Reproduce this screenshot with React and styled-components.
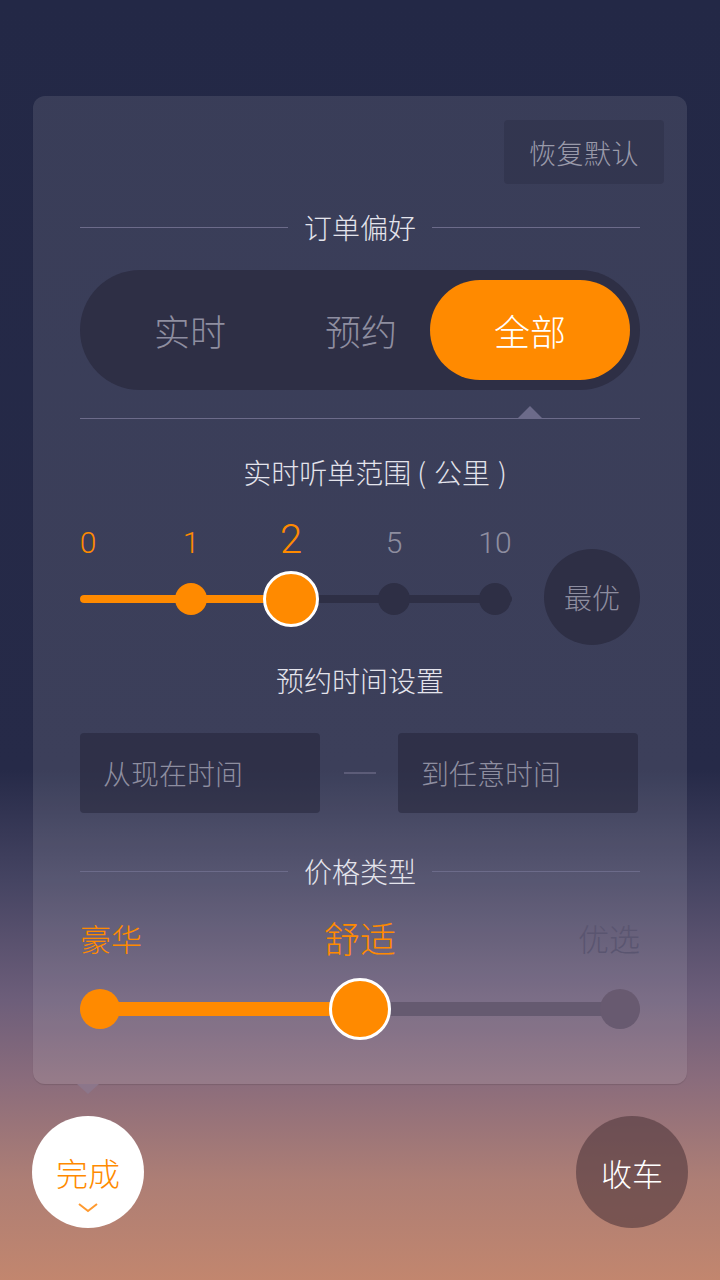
import React from "react";
import styled, { createGlobalStyle } from "styled-components";

const ORANGE = "#ff8a00";

const GlobalStyle = createGlobalStyle`
  html, body {
    margin: 0;
    padding: 0;
  }
  body {
    font-family: "Noto Sans CJK SC", "Noto Sans", sans-serif;
    font-weight: 300;
    background: #232846;
  }
  * {
    box-sizing: border-box;
  }
`;

const Page = styled.div`
  width: 720px;
  height: 1280px;
  overflow: hidden;
  display: flex;
  flex-direction: column;
  padding-top: 96px;
  background: linear-gradient(
    180deg,
    #232846 0px,
    #262a48 770px,
    #454462 880px,
    #6d5e7a 1000px,
    #8a6c7c 1080px,
    #ad7e75 1180px,
    #c2866e 1280px
  );
`;

const Card = styled.div`
  position: relative;
  margin: 0 33px;
  height: 988px;
  border-radius: 12px;
  background: rgba(255, 255, 255, 0.1);
  box-shadow: 0 1px 1px rgba(0, 0, 0, 0.12);
  padding: 24px 47px 0;
  display: flex;
  flex-direction: column;

  &::after {
    content: "";
    position: absolute;
    left: 44px;
    bottom: -10px;
    border-left: 11px solid transparent;
    border-right: 11px solid transparent;
    border-top: 10px solid rgba(140, 118, 138, 1);
  }
`;

const TopRow = styled.div`
  display: flex;
  justify-content: flex-end;
  margin-right: -24px;
`;

const ResetButton = styled.button`
  width: 160px;
  height: 64px;
  border: none;
  border-radius: 4px;
  background: rgba(20, 20, 40, 0.18);
  color: #9a9aaa;
  font-family: inherit;
  font-weight: 300;
  font-size: 27px;
  letter-spacing: 0.5px;
  padding: 0;
`;

const SectionTitle = styled.div`
  display: flex;
  align-items: center;
  gap: 16px;
  height: 40px;
  margin-top: ${({ $mt }) => $mt}px;
  color: #e4e4ec;
  font-size: 28px;

  &::before,
  &::after {
    content: "";
    flex: 1;
    height: 1px;
    background: #6c6b8a;
  }
`;

const Heading = styled.div`
  height: 40px;
  line-height: 40px;
  text-align: center;
  color: #e4e4ec;
  font-size: 28px;
  margin-top: ${({ $mt }) => $mt}px;
  padding-left: ${({ $shift }) => $shift || 0}px;
  white-space: pre;
`;

const Segmented = styled.div`
  margin-top: 23px;
  height: 120px;
  border-radius: 60px;
  background: #2e2f45;
  display: flex;
  align-items: center;
  padding-right: 10px;
`;

const Segment = styled.div`
  width: ${({ $w }) => $w}px;
  margin-right: ${({ $mr }) => $mr || 0}px;
  height: 100px;
  border-radius: 50px;
  display: flex;
  align-items: center;
  justify-content: center;
  font-size: 36px;
  color: ${({ $active }) => ($active ? "#ffffff" : "#8e8ea0")};
  background: ${({ $active }) => ($active ? ORANGE : "transparent")};
`;

const Divider = styled.div`
  position: relative;
  margin-top: 28px;
  height: 1px;
  background: #6c6b8a;

  &::before {
    content: "";
    position: absolute;
    left: 438px;
    bottom: 1px;
    border-left: 12px solid transparent;
    border-right: 12px solid transparent;
    border-bottom: 12px solid #6c6b8a;
  }
`;

const RangeRow = styled.div`
  margin-top: 7px;
  display: flex;
  align-items: flex-end;
  justify-content: space-between;
`;

const RangeBox = styled.div`
  width: 432px;
  height: 124px;
  position: relative;
`;

const RangeLabel = styled.span`
  position: absolute;
  top: ${({ $big }) => ($big ? "21px" : "24px")};
  transform: translateX(-50%);
  font-family: "Roboto", "Noto Sans", sans-serif;
  font-weight: 300;
  font-size: ${({ $big }) => ($big ? "40px" : "30px")};
  line-height: 40px;
  color: ${({ $on }) => ($on ? ORANGE : "#8e8ea0")};
`;

const Track = styled.div`
  position: absolute;
  left: 0;
  right: 0;
  top: ${({ $top }) => $top}px;
  height: ${({ $h }) => $h}px;
  border-radius: ${({ $h }) => $h / 2}px;
  background: ${({ $bg }) => $bg};
`;

const Fill = styled.div`
  height: 100%;
  border-radius: inherit;
  background: ${ORANGE};
`;

const Dot = styled.div`
  position: absolute;
  top: ${({ $top }) => $top}px;
  width: ${({ $size }) => $size}px;
  height: ${({ $size }) => $size}px;
  margin-left: ${({ $size }) => -$size / 2}px;
  margin-top: ${({ $size }) => -$size / 2}px;
  border-radius: 50%;
  background: ${({ $bg }) => $bg};
  border: ${({ $ring }) => ($ring ? "3px solid #ffffff" : "none")};
`;

const BestButton = styled.div`
  width: 96px;
  height: 96px;
  border-radius: 50%;
  background: #2e2f45;
  color: #8e8ea0;
  font-size: 28px;
  display: flex;
  align-items: center;
  justify-content: center;
  margin-bottom: -22px;
`;

const TimeRow = styled.div`
  margin-top: 33px;
  display: flex;
  align-items: center;
`;

const TimeBox = styled.div`
  width: 240px;
  height: 80px;
  border-radius: 4px;
  background: rgba(30, 30, 50, 0.45);
  color: #8e8ea0;
  font-size: 28px;
  display: flex;
  align-items: center;
  padding-left: 23px;
`;

const Dash = styled.div`
  width: 32px;
  height: 2px;
  margin: 0 22px 0 24px;
  background: #5c5c78;
`;

const PriceLabels = styled.div`
  margin-top: 24px;
  height: 44px;
  display: flex;
  align-items: center;
  justify-content: space-between;
`;

const PriceLabel = styled.span`
  font-size: ${({ $big }) => ($big ? "36px" : "31px")};
  color: ${({ $on }) => ($on ? ORANGE : "#5a5570")};
`;

const PriceBox = styled.div`
  position: relative;
  margin-top: 18px;
  height: 64px;
`;

const BottomRow = styled.div`
  margin-top: 32px;
  padding: 0 32px;
  display: flex;
  justify-content: space-between;
`;

const RoundButton = styled.div`
  width: 112px;
  height: 112px;
  border-radius: 50%;
  display: flex;
  flex-direction: column;
  align-items: center;
  justify-content: center;
  font-size: ${({ $light }) => ($light ? "32px" : "31px")};
  color: ${({ $light }) => ($light ? ORANGE : "#ffffff")};
  background: ${({ $light }) => ($light ? "#ffffff" : "rgba(80, 55, 60, 0.6)")};
`;

const Chevron = styled.svg`
  margin-top: 7px;
  margin-bottom: -19px;
`;

const ranges = [
  { label: "0", x: 8 },
  { label: "1", x: 111, dot: true },
  { label: "2", x: 211, big: true },
  { label: "5", x: 314, dot: true },
  { label: "10", x: 415, dot: true },
];
const selected = 2;

export default function App() {
  return (
    <Page>
      <GlobalStyle />
      <Card>
        <TopRow>
          <ResetButton>恢复默认</ResetButton>
        </TopRow>

        <SectionTitle $mt={23}>订单偏好</SectionTitle>
        <Segmented>
          <Segment $w={220}>实时</Segment>
          <Segment $w={122} $mr={8}>
            预约
          </Segment>
          <Segment $w={200} $active>
            全部
          </Segment>
        </Segmented>
        <Divider />

        <Heading $mt={33} $shift={30}>
          {"实时听单范围 ( \u200a公里 \u200a)"}
        </Heading>
        <RangeRow>
          <RangeBox>
            {ranges.map((r, i) => (
              <RangeLabel key={r.label} $on={i <= selected} $big={r.big} style={{ left: r.x }}>
                {r.label}
              </RangeLabel>
            ))}
            <Track $top={96} $h={8} $bg="#2e2f45">
              <Fill style={{ width: ranges[selected].x }} />
            </Track>
            {ranges.map((r, i) =>
              r.dot ? (
                <Dot
                  key={r.label}
                  $top={100}
                  $size={32}
                  $bg={i <= selected ? ORANGE : "#2e2f45"}
                  style={{ left: r.x }}
                />
              ) : null
            )}
            <Dot $top={100} $size={56} $bg={ORANGE} $ring style={{ left: ranges[selected].x }} />
          </RangeBox>
          <BestButton>最优</BestButton>
        </RangeRow>

        <Heading $mt={37}>预约时间设置</Heading>
        <TimeRow>
          <TimeBox>从现在时间</TimeBox>
          <Dash />
          <TimeBox>到任意时间</TimeBox>
        </TimeRow>

        <SectionTitle $mt={38}>价格类型</SectionTitle>
        <PriceLabels>
          <PriceLabel $on>豪华</PriceLabel>
          <PriceLabel $on $big>
            舒适
          </PriceLabel>
          <PriceLabel>优选</PriceLabel>
        </PriceLabels>
        <PriceBox>
          <Track $top={25} $h={14} $bg="#655a70">
            <Fill style={{ width: 280 }} />
          </Track>
          <Dot $top={32} $size={40} $bg={ORANGE} style={{ left: 20 }} />
          <Dot $top={32} $size={40} $bg="#685a70" style={{ left: 540 }} />
          <Dot $top={32} $size={62} $bg={ORANGE} $ring style={{ left: 280 }} />
        </PriceBox>
      </Card>

      <BottomRow>
        <RoundButton $light>
          完成
          <Chevron width="22" height="12" viewBox="0 0 22 12">
            <path d="M2 2 L11 9 L20 2" fill="none" stroke="#ff9a30" strokeWidth="2" />
          </Chevron>
        </RoundButton>
        <RoundButton>收车</RoundButton>
      </BottomRow>
    </Page>
  );
}
